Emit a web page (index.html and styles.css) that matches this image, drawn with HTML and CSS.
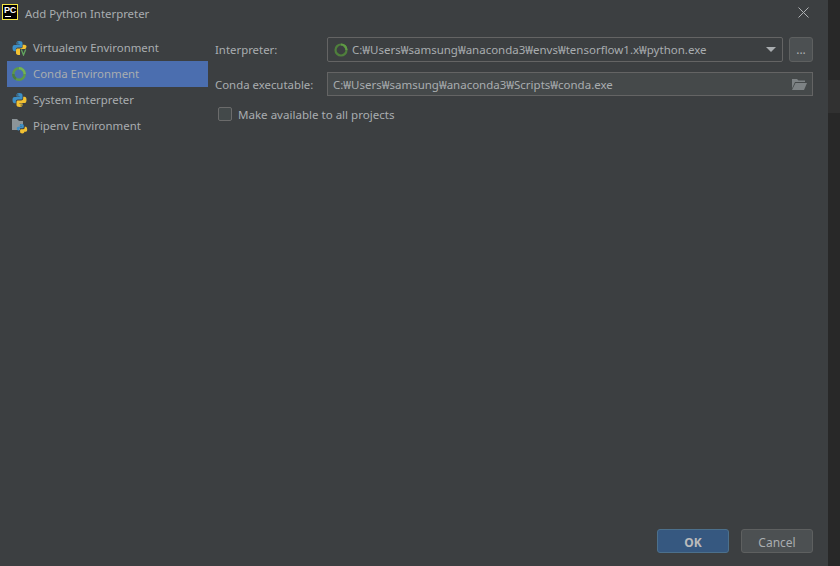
FILE: index.html
```html
<!DOCTYPE html>
<html lang="en">
<head>
<meta charset="utf-8">
<title>Add Python Interpreter</title>
<link rel="stylesheet" href="styles.css">
</head>
<body>
<div class="dialog">
  <header class="titlebar">
    <div class="pc-logo"><span class="pc-text">PC</span><span class="pc-bar"></span></div>
    <span class="title">Add Python Interpreter</span>
    <svg class="close" width="11" height="11" viewBox="0 0 11 11"><path d="M.5.5l10 10M10.500.5l-10 10" stroke="#aeb1b3" stroke-width="1" fill="none"/></svg>
  </header>
  <div class="main">
    <nav class="sidebar">
      <div class="item">
        <svg class="ico" width="16" height="16" viewBox="0 0 16 16"><path d="M7.300 1C5.200 1 4.500 1.800 4.500 3v1.500h3.200V5H2.500C1.200 5 .5 6 .5 8s.7 3.200 2 3.200h1.300V9.600c0-1.100.9-2 2-2h3.100c.9 0 1.600-.7 1.600-1.600V3c0-1.200-1.100-2-3.200-2z" fill="#3d8fc6"/><circle cx="5.800" cy="2.900" r=".7" fill="#3c3f41"/><path d="M10.700 4.800v1.600c0 1.100-.9 2-2 2H5.600c-.9 0-1.600.7-1.600 1.600v3c0 1 .8 1.700 2.200 1.900h2V9h5C14 8.400 14.500 7.200 14.500 6.500c0-1-1-1.700-2.300-1.700z" fill="#f2c132"/><path d="M8 9h8v7H8z" fill="#3c3f41"/><path d="M9.300 9.500l2.200 5.500 2.200-5.500" stroke="#62a55f" stroke-width="1.300" fill="none"/></svg>
        <span class="item-text">Virtualenv Environment</span>
      </div>
      <div class="item selected">
        <svg class="ico" width="16" height="16" viewBox="0 0 16 16"><circle cx="7" cy="8" r="5.700" fill="none" stroke="#5e9a48" stroke-width="2.400"/><path d="M7 2.300a5.700 5.700 0 0 1 5.700 5.700" fill="none" stroke="#72b356" stroke-width="2.400"/><path d="M1.300 8A5.700 5.700 0 0 0 4 12.900" fill="none" stroke="#4a7d45" stroke-width="2.400"/></svg>
        <span class="item-text">Conda Environment</span>
      </div>
      <div class="item">
        <svg class="ico" width="16" height="16" viewBox="0 0 16 16"><path d="M7.300 1C5.200 1 4.500 1.800 4.500 3v1.500h3.200V5H2.500C1.200 5 .5 6 .5 8s.7 3.200 2 3.200h1.300V9.600c0-1.100.9-2 2-2h3.100c.9 0 1.600-.7 1.600-1.600V3c0-1.200-1.100-2-3.200-2z" fill="#3d8fc6"/><circle cx="5.800" cy="2.900" r=".7" fill="#3c3f41"/><path d="M11.200 4.800v1.600c0 1.100-.9 2-2 2H6.100c-.9 0-1.600.7-1.600 1.600v3c0 1.200 1.100 2 3.200 2s2.800-.8 2.800-2v-1.500H7.300V11h5.200c1.300 0 2-1 2-3.100s-.7-3.100-2-3.100z" fill="#f2c132"/><circle cx="9.200" cy="13.100" r=".7" fill="#3c3f41"/></svg>
        <span class="item-text">System Interpreter</span>
      </div>
      <div class="item">
        <svg class="ico" width="16" height="16" viewBox="0 0 16 16"><path d="M0 1h5l2 2h4v3H8v6H0z" fill="#8c9498"/><path d="M9.700 6c-1.500 0-2 .6-2 1.400v1H10v.4H6.300c-1 0-1.500.7-1.500 1.800s.5 1.900 1.500 1.900h.9v-1c0-.7.600-1.300 1.400-1.300h2.100c.6 0 1.100-.5 1.100-1.100V7.400C11.800 6.600 11 6 9.700 6z" fill="#3d8fc6"/><path d="M12.700 8.800v1c0 .8-.6 1.400-1.400 1.400H9.200c-.6 0-1.100.5-1.100 1.100v1.800c0 .8.800 1.400 2.200 1.400s2-.6 2-1.400v-1H10V13.700h3.700c1 0 1.500-.7 1.500-1.900s-.5-3-1.500-3z" fill="#f2c132"/></svg>
        <span class="item-text">Pipenv Environment</span>
      </div>
    </nav>
    <section class="form">
      <div class="row row-interp">
        <label class="label">Interpreter:</label>
        <div class="combo">
          <svg class="ico-small" width="14" height="14" viewBox="0 0 14 14"><circle cx="7" cy="7" r="5.500" fill="none" stroke="#4f7f3c" stroke-width="2.200"/><path d="M7 1.500A5.500 5.500 0 0 1 12.500 7" fill="none" stroke="#5f9a45" stroke-width="2.200"/></svg>
          <span class="combo-text">C:₩Users₩samsung₩anaconda3₩envs₩tensorflow1.x₩python.exe</span>
          <span class="arrow"></span>
        </div>
        <button class="browse">...</button>
      </div>
      <div class="row row-exec">
        <label class="label">Conda executable:</label>
        <div class="field">
          <span class="field-text">C:₩Users₩samsung₩anaconda3₩Scripts₩conda.exe</span>
          <svg class="folder" width="15" height="11" viewBox="0 0 15 11"><path d="M0 0h5l1.500 1.500H13V3H3L0 9.500z" fill="#7d8284"/><path d="M3.500 4H15l-3 7H0z" fill="#7d8284"/></svg>
        </div>
      </div>
      <div class="check-row">
        <span class="checkbox"></span>
        <span class="check-label">Make available to all projects</span>
      </div>
    </section>
  </div>
  <footer class="footer">
    <button class="btn primary">OK</button>
    <button class="btn">Cancel</button>
  </footer>
</div>
<aside class="backdrop">
  <div class="backdrop-band"></div>
</aside>
</body>
</html>
```
FILE: styles.css
```css
* { box-sizing: border-box; }
html, body { margin: 0; height: 100%; background: #282828; }
body {
  font-family: "Noto Sans", "Open Sans", "Noto Sans CJK KR", sans-serif;
  font-size: 11.4px;
  color: #a9adb0;
  overflow: hidden;
  display: flex;
}
.backdrop { flex: 1; padding-top: 80px; }
.backdrop-band { height: 33px; background: #313131; }
.dialog {
  width: 828px;
  height: 566px;
  flex: none;
  background: #3c3f41;
  display: flex;
  flex-direction: column;
}
.titlebar {
  height: 27px;
  display: flex;
  align-items: center;
  padding: 0 19px 0 2px;
  flex: none;
}
.pc-logo {
  width: 16px;
  height: 16px;
  background: #000;
  border: 1px solid #f5e642;
  position: relative;
  margin-right: 7px;
  margin-top: -3px;
}
.pc-text {
  position: absolute;
  left: 1px;
  top: 0;
  color: #fff;
  font: bold 9px/10px "Liberation Sans", sans-serif;
  letter-spacing: -0.3px;
}
.pc-bar {
  position: absolute;
  left: 2px;
  bottom: 2px;
  width: 6px;
  height: 1px;
  background: #fff;
}
.title { color: #a9adb0; }
.close { margin-left: auto; margin-top: -3px; }
.main { flex: 1; display: flex; min-height: 0; }
.sidebar {
  width: 208px;
  padding: 8px 0 0 7px;
  flex: none;
}
.item {
  height: 26px;
  display: flex;
  align-items: center;
  gap: 5px;
  padding-left: 5px;
  white-space: nowrap;
}
.item-text { padding-bottom: 2px; }
.item.selected { background: #4b6eaf; }
.ico { flex: none; }
.form { flex: 1; padding: 10px 15px 0 7px; min-width: 0; }
.row { display: flex; align-items: center; }
.row-interp { height: 25px; margin-bottom: 10px; }
.row-exec { height: 24px; }
.label { width: 112px; flex: none; white-space: nowrap; }
.combo {
  width: 456px;
  height: 25px;
  border: 1px solid #646464;
  border-radius: 2px;
  background: #3c3f41;
  display: flex;
  align-items: center;
  padding: 0 6px 0 6px;
  flex: none;
}
.ico-small { flex: none; margin-right: 4px; }
.combo-text, .field-text { white-space: nowrap; font-size: 11.5px; }
.arrow {
  margin-left: auto;
  width: 0;
  height: 0;
  border-left: 5px solid transparent;
  border-right: 5px solid transparent;
  border-top: 5px solid #a9adb0;
}
.browse {
  width: 24px;
  height: 25px;
  margin-left: 6px;
  padding: 0;
  background: #4c5052;
  border: 1px solid #5e6060;
  border-radius: 3px;
  color: #a9adb0;
  font: 12px "Noto Sans", sans-serif;
  flex: none;
}
.field {
  width: 486px;
  height: 24px;
  border: 1px solid #646464;
  background: #45494a;
  display: flex;
  align-items: center;
  justify-content: space-between;
  padding: 0 5px 0 5px;
  flex: none;
}
.check-row {
  display: flex;
  align-items: center;
  margin-top: 7px;
  padding-left: 3px;
  height: 22px;
}
.checkbox {
  width: 14px;
  height: 14px;
  border: 1px solid #6b6b6b;
  border-radius: 2px;
  background: #43494a;
  margin-right: 6px;
  flex: none;
}
.check-label { font-size: 11.55px; }
.footer {
  height: 50px;
  flex: none;
  display: flex;
  justify-content: flex-end;
  gap: 12px;
  padding: 13px 15px 0 0;
}
.btn {
  width: 72px;
  height: 24px;
  padding: 2px 0 0;
  background: #4c5052;
  border: 1px solid #5e6060;
  border-radius: 3px;
  color: #a9adb0;
  font: 12px "Noto Sans", sans-serif;
}
.btn.primary {
  background: #365880;
  border-color: #4c708c;
  color: #bbbbbb;
  font-weight: bold;
}
```
